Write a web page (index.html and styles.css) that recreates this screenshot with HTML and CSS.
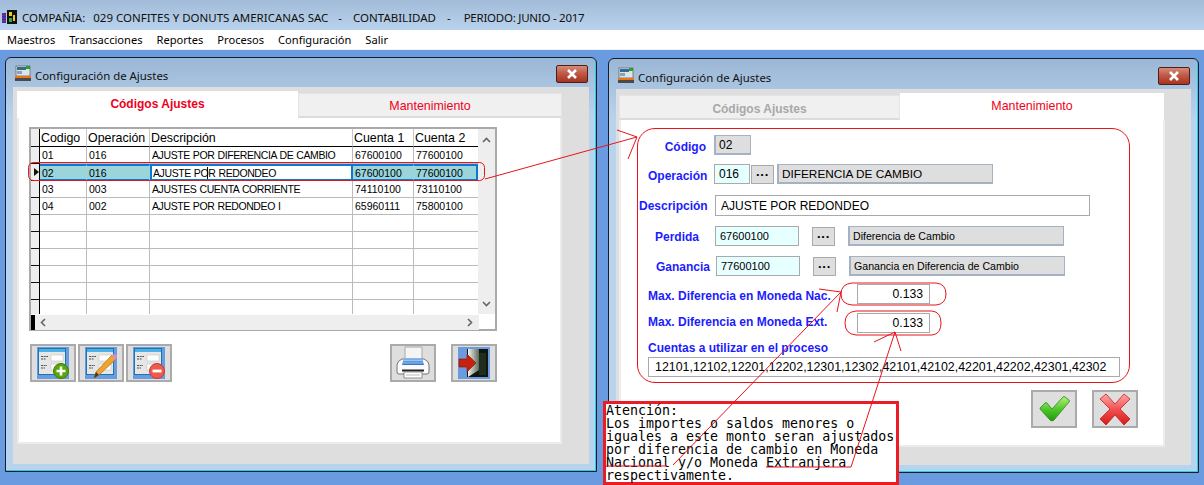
FILE: index.html
```html
<!DOCTYPE html>
<html lang="es">
<head>
    <meta charset="UTF-8">
    <title>Configuración de Ajustes</title>
    <link rel="stylesheet" href="styles.css">
</head>
<body>
    <svg class="defs" width="0" height="0">
        <defs>
            <linearGradient id="gGreen" x1="0" y1="0" x2="0" y2="1">
                <stop offset="0" stop-color="#b4f078"/><stop offset=".55" stop-color="#4cc428"/><stop offset="1" stop-color="#1f9a10"/>
            </linearGradient>
            <linearGradient id="gRed" x1="0" y1="0" x2="0" y2="1">
                <stop offset="0" stop-color="#ffa8a8"/><stop offset=".5" stop-color="#f25050"/><stop offset="1" stop-color="#d81818"/>
            </linearGradient>
            <linearGradient id="gDoor" x1="0" y1="0" x2="1" y2="0">
                <stop offset="0" stop-color="#f4f4f0"/><stop offset="1" stop-color="#5d6d58"/>
            </linearGradient>
            <linearGradient id="gGlass" x1="0" y1="0" x2="0" y2="1">
                <stop offset="0" stop-color="#8fbcf0"/><stop offset="1" stop-color="#2f73c8"/>
            </linearGradient>
            <symbol id="formIcon" viewBox="0 0 32 32">
                <rect width="32" height="32" fill="#6a9ae0"/>
                <rect x="1" y="1" width="28" height="27" fill="#1479b0"/>
                <rect x="2" y="2" width="26" height="3" fill="#4fb0e6"/>
                <rect x="2" y="5" width="26" height="22" fill="#e6e6e6"/>
                <rect x="14" y="8" width="12" height="6" fill="#fff" stroke="#bbb" stroke-width=".5"/>
                <rect x="14" y="17" width="12" height="6" fill="#fff" stroke="#bbb" stroke-width=".5"/>
                <path d="M4 9.500h7M4 12h5M4 18.500h6M4 21h4" stroke="#555" stroke-width="1" stroke-dasharray="2 .6"/>
            </symbol>
            <symbol id="winIcon" viewBox="0 0 16 17">
                <rect x="1" y="1" width="14" height="10" fill="#dfe4e8" stroke="#6b6b6b" stroke-width=".8"/>
                <rect x="2" y="2" width="9" height="3" fill="#2f6f8f"/>
                <rect x="11" y="1" width="4" height="3" fill="#2aa12a"/>
                <rect x="2" y="6" width="5" height="3" fill="#8aa2b5"/>
                <rect x="0" y="11" width="16" height="2" fill="#e8761c"/>
                <rect x="0" y="13" width="16" height="3" fill="#4a4a4a"/>
            </symbol>
        </defs>
    </svg>

    <header class="app-title">
        <svg class="app-icon" width="16" height="16" viewBox="0 0 16 16">
            <rect x="0" y="4" width="4" height="10" fill="#2233cc"/>
            <path d="M0 6h4M0 9h4M0 12h4" stroke="#e02020" stroke-width="1"/>
            <rect x="5" y="1" width="10" height="14" fill="#111"/>
            <rect x="7" y="3" width="3" height="4" fill="#e8d020"/>
            <rect x="11" y="6" width="2" height="6" fill="#e8d020"/>
            <rect x="7" y="9" width="3" height="4" fill="#38a838"/>
        </svg>
        <span>COMPAÑIA:</span><span class="t-code">029 CONFITES Y DONUTS AMERICANAS SAC</span><span class="t-dash">-</span><span class="t-mod">CONTABILIDAD</span><span class="t-dash2">-</span><span class="t-per">PERIODO: JUNIO - 2017</span>
    </header>
    <nav class="menu">
        <span>Maestros</span>
        <span>Transacciones</span>
        <span>Reportes</span>
        <span>Procesos</span>
        <span>Configuración</span>
        <span>Salir</span>
    </nav>

    <main class="desktop">
        <section class="window win-list">
            <div class="win-title">
                <svg class="win-icon"><use href="#winIcon"/></svg>
                <span>Configuración de Ajustes</span>
                <div class="close-btn"><svg width="12" height="10" viewBox="0 0 12 10"><path d="M2 1l8 8M10 1l-8 8" stroke="#fff" stroke-width="2.600"/></svg></div>
            </div>
            <div class="win-body">
                <div class="tabs">
                    <div class="tab tab-on tab-bold">Códigos Ajustes</div>
                    <div class="tab tab-off tab-thin">Mantenimiento</div>
                </div>
                <div class="page">
                    <div class="grid">
                        <div class="grid-main">
                            <div class="grid-clip">
                                <table class="grid-table">
                                    <colgroup>
                                        <col class="c0"><col class="c1"><col class="c2"><col class="c3"><col class="c4"><col class="c5">
                                    </colgroup>
                                    <thead>
                                        <tr><th class="ind"></th><th>Codigo</th><th>Operación</th><th>Descripción</th><th>Cuenta 1</th><th>Cuenta 2</th></tr>
                                    </thead>
                                    <tbody>
                                        <tr><td class="ind"></td><td>01</td><td>016</td><td class="txt">AJUSTE POR DIFERENCIA DE CAMBIO</td><td>67600100</td><td>77600100</td></tr>
                                        <tr class="sel"><td class="ind"><i class="arrow"></i></td><td>02</td><td>016</td><td class="txt desc">AJUSTE PO<span class="caret">R REDONDEO</span></td><td>67600100</td><td>77600100</td></tr>
                                        <tr><td class="ind"></td><td>03</td><td>003</td><td class="txt">AJUSTES CUENTA CORRIENTE</td><td>74110100</td><td>73110100</td></tr>
                                        <tr><td class="ind"></td><td>04</td><td>002</td><td class="txt">AJUSTE POR REDONDEO I</td><td>65960111</td><td>75800100</td></tr>
                                        <tr><td class="ind"></td><td></td><td></td><td></td><td></td><td></td></tr>
                                        <tr><td class="ind"></td><td></td><td></td><td></td><td></td><td></td></tr>
                                        <tr><td class="ind"></td><td></td><td></td><td></td><td></td><td></td></tr>
                                        <tr><td class="ind"></td><td></td><td></td><td></td><td></td><td></td></tr>
                                        <tr><td class="ind"></td><td></td><td></td><td></td><td></td><td></td></tr>
                                        <tr><td class="ind"></td><td></td><td></td><td></td><td></td><td></td></tr>
                                    </tbody>
                                </table>
                            </div>
                            <div class="vscroll">
                                <svg width="9" height="6" viewBox="0 0 9 6"><path d="M1 5l3.500-3.500L8 5" fill="none" stroke="#666" stroke-width="1.600"/></svg>
                                <svg width="9" height="6" viewBox="0 0 9 6"><path d="M1 1l3.500 3.500L8 1" fill="none" stroke="#666" stroke-width="1.600"/></svg>
                            </div>
                        </div>
                        <div class="hscroll">
                            <i class="hscroll-mark"></i>
                            <div class="hscroll-bar">
                                <svg width="6" height="9" viewBox="0 0 6 9"><path d="M5 1L1.500 4.500 5 8" fill="none" stroke="#666" stroke-width="1.600"/></svg>
                                <svg width="6" height="9" viewBox="0 0 6 9"><path d="M1 1l3.500 3.500L1 8" fill="none" stroke="#666" stroke-width="1.600"/></svg>
                            </div>
                        </div>
                    </div>

                    <div class="toolbar">
                        <div class="tool">
                            <svg class="ico32" viewBox="0 0 32 32">
                                <use href="#formIcon"/>
                                <circle cx="24" cy="24" r="7.500" fill="#5aa60a" stroke="#3f7d05"/>
                                <path d="M24 19.500v9M19.500 24h9" stroke="#fff" stroke-width="2.600"/>
                            </svg>
                        </div>
                        <div class="tool">
                            <svg class="ico32" viewBox="0 0 32 32">
                                <use href="#formIcon"/>
                                <path d="M9 31l2-6L27 8l4 4-17 16z" fill="#f2a42a" stroke="#a86a10" stroke-width=".7"/>
                                <path d="M9 31l2-6 3 3z" fill="#3a3a3a"/>
                                <path d="M26 9l4 4 1.500-2a2.500 2.500 0 0 0-3.500-3.500z" fill="#d78fc0"/>
                            </svg>
                        </div>
                        <div class="tool">
                            <svg class="ico32" viewBox="0 0 32 32">
                                <use href="#formIcon"/>
                                <circle cx="24" cy="24" r="7.500" fill="#ee5a4e" stroke="#c63a30"/>
                                <path d="M19.500 24h9" stroke="#fff" stroke-width="2.800"/>
                            </svg>
                        </div>
                        <div class="tool tool-print">
                            <svg class="ico36" viewBox="0 0 36 36">
                                <path d="M10 2h17v16H10z" fill="#f4f4f4" stroke="#a8a8a8"/>
                                <path d="M2 20q0-4 5-6h22q5 2 5 6v7q0 2-2 2H4q-2 0-2-2z" fill="#fbfbfb" stroke="#555" stroke-width=".8"/>
                                <path d="M9 13h18l2 7H7z" fill="url(#gGlass)"/>
                                <path d="M8.500 15.500h19M8 18h20" stroke="#b4d4f4" stroke-width=".7"/>
                                <path d="M7 24.500h22v2H7z" fill="#222"/>
                                <path d="M9 27h18v6H9z" fill="#fff" stroke="#777" stroke-width=".8"/>
                                <path d="M11 30h14" stroke="#bbb"/>
                            </svg>
                        </div>
                        <div class="tool tool-exit">
                            <svg class="ico32" viewBox="0 0 32 32">
                                <rect width="32" height="32" fill="#6a9ae0"/>
                                <rect x="9" y="2" width="21" height="28" fill="#10170f"/>
                                <path d="M10 2h11l0 21-11 7z" fill="url(#gDoor)"/>
                                <path d="M21 6h7v22h-7z" fill="#1f2c1e"/>
                                <path d="M1 12h8V7l9 9-9 9v-5H1z" fill="#c8220e" stroke="#7d1206" stroke-width=".6"/>
                            </svg>
                        </div>
                    </div>
                </div>
            </div>
        </section>

        <section class="window win-form">
            <div class="win-title">
                <svg class="win-icon"><use href="#winIcon"/></svg>
                <span>Configuración de Ajustes</span>
                <div class="close-btn"><svg width="12" height="10" viewBox="0 0 12 10"><path d="M2 1l8 8M10 1l-8 8" stroke="#fff" stroke-width="2.600"/></svg></div>
            </div>
            <div class="win-body">
                <div class="tabs">
                    <div class="tab tab-off tab-bold tab-grey">Códigos Ajustes</div>
                    <div class="tab tab-on tab-thin">Mantenimiento</div>
                </div>
                <div class="page page-form">
                    <div class="frame">
                        <div class="row row-code">
                            <div class="lbl lbl-right">Código</div>
                            <div class="fld fld-off fld-code">02</div>
                        </div>
                        <div class="row row-oper">
                            <div class="lbl lbl-right">Operación</div>
                            <div class="fld fld-key fld-oper">016</div>
                            <div class="dots dots-oper">···</div>
                            <div class="fld fld-off fld-opername">DIFERENCIA DE CAMBIO</div>
                        </div>
                        <div class="row row-desc">
                            <div class="lbl lbl-desc">Descripción</div>
                            <div class="fld fld-desc">AJUSTE POR REDONDEO</div>
                        </div>
                        <div class="row row-per">
                            <div class="lbl lbl-acc">Perdida</div>
                            <div class="fld fld-key fld-acc">67600100</div>
                            <div class="dots">···</div>
                            <div class="fld fld-off fld-accname">Diferencia de Cambio</div>
                        </div>
                        <div class="row row-gan">
                            <div class="lbl lbl-acc">Ganancia</div>
                            <div class="fld fld-key fld-acc">77600100</div>
                            <div class="dots">···</div>
                            <div class="fld fld-off fld-accname">Ganancia en Diferencia de Cambio</div>
                        </div>
                        <div class="row row-nac">
                            <div class="lbl lbl-max lbl-low">Max. Diferencia en Moneda Nac.</div>
                            <div class="fld fld-num">0.133</div>
                        </div>
                        <div class="row row-ext">
                            <div class="lbl lbl-max lbl-up">Max. Diferencia en Moneda Ext.</div>
                            <div class="fld fld-num">0.133</div>
                        </div>
                        <div class="lbl lbl-cuentas">Cuentas a utilizar en el proceso</div>
                        <div class="fld fld-cuentas">12101,12102,12201,12202,12301,12302,42101,42102,42201,42202,42301,42302</div>
                    </div>
                    <div class="actions">
                        <div class="tool">
                            <svg class="ico36" viewBox="0 0 36 36">
                                <path d="M4 18q0-1 1-2l4-4q1-1 2 0l5 6L27 6q1-1 2 0l4 3q1 1 0 2L18 29q-2 2-4 0z" fill="url(#gGreen)" stroke="#2b8a1c" stroke-width=".8"/>
                            </svg>
                        </div>
                        <div class="tool">
                            <svg class="ico36" viewBox="0 0 36 36">
                                <path d="M9 3l9 10 9-10 6 5-10 10 10 10-6 6-9-10-9 10-6-6 10-10L3 8z" fill="url(#gRed)" stroke="#c02020" stroke-width=".8"/>
                            </svg>
                        </div>
                    </div>
                </div>
            </div>
        </section>

        <aside class="note">Atención:
Los importes o saldos menores o
iguales a este monto seran ajustados
por diferencia de cambio en Moneda
Nacional y/o Moneda Extranjera
respectivamente.</aside>
    </main>

    <!-- anotaciones en rojo encima de la captura -->
    <svg class="marks" width="1204" height="485" viewBox="0 0 1204 485">
        <g fill="none" stroke="#e8141c" stroke-width="1">
            <rect x="28.500" y="162.500" width="456" height="18" rx="5"/>
            <path d="M485 179L637 137M617 130L637 137M628 159L637 137"/>
            <path d="M852 283H936Q946 284 946 294Q946 304 936 305H852Q841 304 841 294Q841 284 852 283Z"/>
            <path d="M856 311H932Q941 312 941 323Q941 334 932 335H856Q845 334 845 323Q845 312 856 311Z"/>
            <path d="M819 289L841 292M837 312L841 292M841 292L673 465"/>
            <path d="M874 342L895 332M901 351L895 332M895 332L851 467"/>
            <path d="M605 466H667M766 467H851"/>
        </g>
    </svg>
</body>
</html>
```

FILE: styles.css
```css
* {
    box-sizing: border-box;
}

html, body {
    height: 485px;
    overflow: hidden;
}

body {
    margin: 0;
    position: relative;
    font-family: "Liberation Sans", Arial, sans-serif;
    background-color: #6a9ae0;
    color: #000;
}

.defs {
    position: absolute;
}

/* barra de titulo */
.app-title {
    height: 30px;
    padding: 4px 0 0 2px;
    display: flex;
    align-items: center;
    background: linear-gradient(#a2bbd8, #b9d3ee);
    font-family: "Noto Sans", sans-serif;
    font-size: 11.5px;
    color: #10100c;
    white-space: nowrap;
}

.app-icon {
    margin-right: 4px;
}

.t-code { margin-left: 8px; }
.t-dash { margin-left: 10px; }
.t-mod { margin-left: 11px; }
.t-dash2 { margin-left: 11px; }
.t-per { margin-left: 13px; letter-spacing: -.25px; }

.menu {
    height: 19px;
    padding-left: 7px;
    display: flex;
    align-items: center;
    gap: 14px;
    background-color: #fff;
    font-family: "Noto Sans", sans-serif;
    font-size: 11.1px;
}

.desktop {
    height: 436px;
    border-top: 1px solid #eef3fb;
}

/* ventanas */
.window {
    position: absolute;
    display: flex;
    flex-direction: column;
    padding: 0 7px 7px;
    background: linear-gradient(#9cb7d5, #b8d3ee 60px);
    border: 1px solid #15202c;
    border-radius: 6px 6px 0 0;
    box-shadow: inset -1px -1px 0 #27d0e0;
}

.win-list {
    left: 5px;
    top: 57px;
    width: 592px;
    height: 415px;
}

.win-form {
    left: 608px;
    top: 58px;
    width: 591px;
    height: 415px;
}

.win-title {
    height: 29px;
    flex: none;
    padding: 6px 1px 0 2px;
    display: flex;
    align-items: center;
    font-family: "Noto Sans", sans-serif;
    font-size: 11.4px;
    color: #111;
}

.win-form .win-title {
    height: 30px;
}

.win-icon {
    width: 16px;
    height: 17px;
    margin-right: 4px;
    margin-top: -4px;
}

.close-btn {
    width: 32px;
    height: 18px;
    margin-left: auto;
    margin-top: -3px;
    display: flex;
    align-items: center;
    justify-content: center;
    background: linear-gradient(#d78b7a, #c05a48 45%, #a8331f);
    border: 1px solid #4c2018;
    border-radius: 2px;
}

.win-body {
    flex: 1;
    padding: 4px 4px 0;
    background-color: #dedede;
}

.win-form .win-body {
    padding-left: 3px;
}

/* pestañas */
.tabs {
    display: flex;
    align-items: flex-end;
    height: 27px;
}

.tab {
    display: flex;
    align-items: center;
    justify-content: center;
    color: #f00020;
    font-size: 12.4px;
}

.tab-on {
    height: 27px;
    background-color: #fff;
    padding-bottom: 1px;
}

.tab-off {
    height: 25px;
    padding-top: 2px;
    background-color: #f0f0f0;
    border: 1px solid #e4e4e4;
    border-bottom: 2px solid #dcdcdc;
}

.tab-bold {
    width: 281px;
    font-weight: bold;
    font-size: 12px;
}

.tab-thin {
    width: 264px;
}

.tab-grey {
    padding-top: 4px;
    color: #a8a8a8;
}

.page {
    width: 545px;
    height: 326px;
    padding: 9px 0 0 10px;
    background-color: #fff;
    border-right: 2px solid #ececec;
    border-bottom: 2px solid #ececec;
    border-left: 2px solid #ececec;
}

.page-form {
    width: 546px;
    height: 327px;
    padding: 8px 0 0 16px;
}

/* grilla */
.grid {
    width: 468px;
    height: 204px;
    background-color: #fff;
    border: 2px solid #aaa;
}

.grid-main {
    display: flex;
    height: 185px;
}

.grid-clip {
    width: 447px;
    height: 185px;
    overflow: hidden;
}

.grid-table {
    width: 447px;
    table-layout: fixed;
    border-collapse: separate;
    border-spacing: 0;
    font-size: 10.5px;
}

.c0 { width: 9px; }
.c1 { width: 47px; }
.c2 { width: 63px; }
.c3 { width: 203px; }
.c4 { width: 61px; }
.c5 { width: 64px; }

.grid-table th {
    height: 18px;
    padding: 0 0 0 1px;
    text-align: left;
    font-weight: normal;
    font-size: 12.4px;
    border-right: 1px solid #c8c8c8;
    border-bottom: 1px solid #000;
    white-space: nowrap;
    overflow: hidden;
}

.grid-table td {
    height: 17px;
    padding: 0 0 0 2px;
    border-right: 1px solid #bbb;
    border-bottom: 1px solid #bbb;
    white-space: nowrap;
    overflow: hidden;
}

.grid-table td.txt {
    letter-spacing: -.4px;
    word-spacing: .5px;
}

.grid-table th:last-child,
.grid-table td:last-child {
    border-right: none;
}

.grid-table th.ind,
.grid-table td.ind {
    padding: 0;
    background-color: #eee;
    border-right: 1px solid #000;
    border-bottom: 1px solid #111;
}

.grid-table .sel td {
    background-color: #9bd5da;
    border-top: 2px solid #0a78d7;
    border-bottom: 2px solid #0a78d7;
    border-right-color: #9bd5da;
}

.grid-table .sel td.ind {
    background-color: #eee;
    border-top: none;
    border-bottom: 1px solid #111;
    border-right-color: #000;
}

.grid-table .sel td.desc {
    padding-left: 1px;
    background-color: #fff;
    border-left: 2px solid #0a78d7;
    border-right: 2px solid #0a78d7;
}

.grid-table .sel td:last-child {
    border-right: 2px solid #0a78d7;
}

.arrow {
    display: block;
    width: 0;
    height: 0;
    margin-left: 3px;
    border-left: 5px solid #111;
    border-top: 4px solid transparent;
    border-bottom: 4px solid transparent;
}

.caret {
    box-shadow: -1px 0 0 #000;
}

.vscroll {
    width: 17px;
    padding: 8px 0 7px;
    display: flex;
    flex-direction: column;
    align-items: center;
    justify-content: space-between;
    background-color: #eee;
}

.hscroll {
    display: flex;
    height: 15px;
    margin-top: 1px;
}

.hscroll-mark {
    width: 4px;
    background-color: #000;
}

.hscroll-bar {
    width: 444px;
    padding: 0 6px 0 5px;
    display: flex;
    align-items: center;
    justify-content: space-between;
    background-color: #eee;
}

/* botones */
.toolbar {
    display: flex;
    gap: 2px;
    margin: 13px 0 0 1px;
}

.tool {
    width: 46px;
    height: 38px;
    flex: none;
    display: flex;
    align-items: center;
    justify-content: center;
    background-color: #dedede;
    border: 2px solid #aaa;
}

.tool-print {
    margin-left: 216px;
}

.tool-exit {
    margin-left: 13px;
}

.ico32 {
    flex: none;
    width: 32px;
    height: 32px;
}

.ico36 {
    flex: none;
    width: 36px;
    height: 36px;
}

/* formulario */
.frame {
    width: 493px;
    height: 255px;
    padding-left: 10px;
    border: 1px solid #e8141c;
    border-radius: 18px;
}

.row {
    display: flex;
    align-items: center;
}

.row-code { margin-top: 6px; height: 20px; }
.row-oper { margin-top: 9px; height: 20px; }
.row-desc { margin-top: 11px; height: 21px; }
.row-per { margin-top: 10px; height: 20px; }
.row-gan { margin-top: 10px; height: 20px; padding-left: 1px; }
.row-nac { margin-top: 8px; height: 20px; }
.row-ext { margin-top: 9px; height: 20px; }

.lbl {
    color: #1c1cff;
    font-weight: bold;
    font-size: 12px;
    white-space: nowrap;
}

.lbl-right {
    width: 58px;
    margin-right: 8px;
    padding-top: 4px;
    text-align: right;
}

.lbl-desc {
    width: 67px;
    margin-left: -9px;
    margin-right: 9px;
}

.lbl-acc {
    width: 67px;
    padding: 2px 0 0 7px;
}

.lbl-max {
    width: 209px;
}

.lbl-low {
    padding-top: 4px;
}

.lbl-up {
    padding-bottom: 2px;
}

.lbl-cuentas {
    margin-top: 8px;
    height: 14px;
    line-height: 14px;
}

.fld {
    height: 20px;
    flex: none;
    padding-left: 5px;
    display: flex;
    align-items: center;
    border: 1px solid #aaa;
    background-color: #fff;
    font-size: 12px;
    white-space: nowrap;
}

.fld-off {
    padding-left: 3px;
    background-color: #dedede;
    border: 2px solid #a4b2c4;
    border-width: 1px 1px 2px 2px;
}

.fld-key {
    padding-left: 4px;
    background-color: #e6ffff;
}

.fld-code { width: 37px; }
.fld-oper { width: 36px; }
.fld-opername { width: 216px; font-size: 11.8px; }
.fld-desc { width: 375px; height: 21px; }
.fld-acc { width: 84px; font-size: 11px; }
.fld-accname { width: 216px; font-size: 10.6px; }

.fld-num {
    width: 73px;
    padding: 0 6px 0 0;
    justify-content: flex-end;
    font-size: 12.2px;
}

.fld-cuentas {
    width: 472px;
    margin-top: 2px;
    padding-left: 6px;
    font-size: 12.4px;
}

.dots {
    width: 23px;
    height: 19px;
    flex: none;
    margin: 0 13px;
    display: flex;
    align-items: center;
    justify-content: center;
    background-color: #dedede;
    border: 1px solid #aaa;
    font-weight: bold;
    font-size: 13px;
}

.dots-oper {
    margin: 0 3px 0 1px;
}

.actions {
    display: flex;
    gap: 15px;
    margin: 7px 0 0 394px;
}

/* nota y anotaciones */
.note {
    position: absolute;
    left: 603px;
    top: 401px;
    width: 296px;
    height: 84px;
    margin: 0;
    background-color: #fff;
    border: 3px solid #ed1c24;
    font-family: "DejaVu Sans Mono", monospace;
    font-size: 13.3px;
    line-height: 13px;
    white-space: pre;
}

.marks {
    position: absolute;
    left: 0;
    top: 0;
    pointer-events: none;
}
```
